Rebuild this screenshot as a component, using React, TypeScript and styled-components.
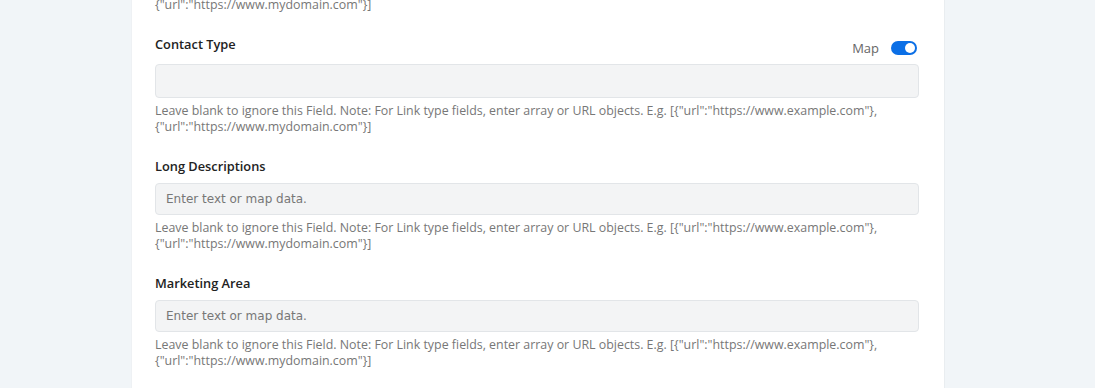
import styled, { createGlobalStyle } from "styled-components";

const GlobalStyle = createGlobalStyle`
  html, body {
    margin: 0;
    padding: 0;
    background: #f1f5f8;
    font-family: "Open Sans", "Lato", sans-serif;
  }
`;

const HELP =
  'Leave blank to ignore this Field. Note: For Link type fields, enter array or URL objects. E.g. [{"url":"https://www.example.com"},';
const HELP_TAIL = '{"url":"https://www.mydomain.com"}]';

type FieldProps = {
  label: string;
  placeholder?: string;
  mapToggle?: boolean;
};

const Field = ({ label, placeholder = "", mapToggle }: FieldProps) => (
  <FieldWrap>
    <FieldHeader $tall={mapToggle}>
      <Label>{label}</Label>
      {mapToggle && (
        <MapGroup>
          <MapText>Map</MapText>
          <Toggle>
            <Knob />
          </Toggle>
        </MapGroup>
      )}
    </FieldHeader>
    <Input placeholder={placeholder} $tall={mapToggle} readOnly />
    <Help>
      {HELP}
      <br />
      {HELP_TAIL}
    </Help>
  </FieldWrap>
);

export default function App() {
  return (
    <>
      <GlobalStyle />
      <Page>
        <Card>
          <Help>{HELP_TAIL}</Help>
          <Fields>
            <Field label="Contact Type" mapToggle />
            <Field label="Long Descriptions" placeholder="Enter text or map data." />
            <Field label="Marketing Area" placeholder="Enter text or map data." />
          </Fields>
        </Card>
      </Page>
    </>
  );
}

const Page = styled.div`
  height: 388px;
  overflow: hidden;
  padding-left: 131px;
  background: #f1f5f8;
`;

const Card = styled.div`
  width: 814px;
  min-height: 400px;
  box-sizing: border-box;
  margin-top: -8px;
  padding: 0 25px 0 23px;
  background: #fff;
  border-left: 1px solid #eef1f4;
  border-right: 1px solid #e9edf0;
`;

const Fields = styled.div`
  display: flex;
  flex-direction: column;
  gap: 22px;
  margin-top: 22px;
`;

const FieldWrap = styled.div`
  display: flex;
  flex-direction: column;
`;

const FieldHeader = styled.div<{ $tall?: boolean }>`
  display: flex;
  justify-content: space-between;
  align-items: flex-end;
  height: ${(p) => (p.$tall ? "21px" : "18px")};
  margin-bottom: 8px;
`;

const Label = styled.div`
  align-self: flex-start;
  font-size: 12.8px;
  line-height: 18px;
  font-weight: 600;
  color: #222;
`;

const MapGroup = styled.div`
  display: flex;
  align-items: center;
  gap: 12px;
  margin-right: 2px;
  margin-bottom: 1px;
`;

const MapText = styled.span`
  font-size: 13px;
  color: #666;
  line-height: 14px;
`;

const Toggle = styled.div`
  width: 26px;
  height: 14px;
  border-radius: 7px;
  background: #0b6fe6;
  display: flex;
  align-items: center;
  justify-content: flex-end;
  padding: 0 2px;
  box-sizing: border-box;
`;

const Knob = styled.div`
  width: 10px;
  height: 10px;
  border-radius: 50%;
  background: #fff;
`;

const Input = styled.input<{ $tall?: boolean }>`
  box-sizing: border-box;
  width: 100%;
  height: ${(p) => (p.$tall ? "34px" : "32px")};
  padding: 0 10px;
  border: 1px solid #e2e5e8;
  border-radius: 4px;
  background: #f3f4f5;
  font-family: "DejaVu Sans", sans-serif;
  font-size: 12px;
  color: #555;
  outline: none;
  &::placeholder {
    color: #777;
  }
`;

const Help = styled.div`
  margin-top: 5px;
  font-size: 12.4px;
  line-height: 16px;
  color: #777;
  white-space: nowrap;
`;
